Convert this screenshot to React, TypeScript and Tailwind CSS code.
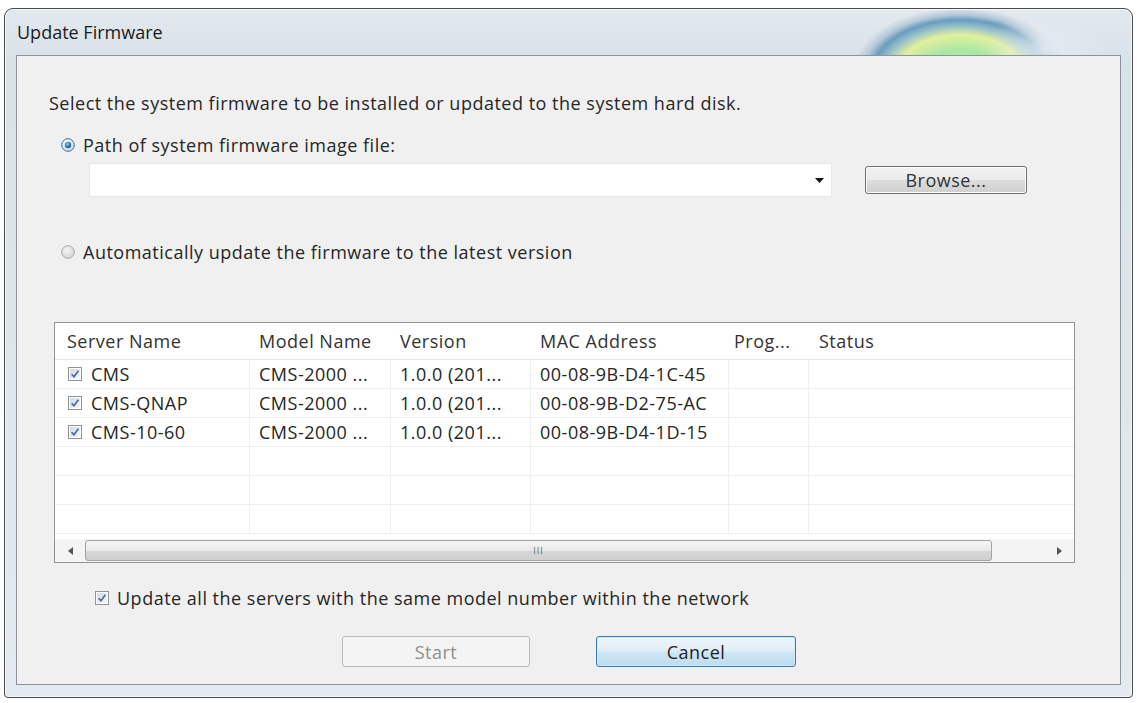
import React from "react";

interface ServerRow {
  name: string;
  model: string;
  version: string;
  mac: string;
}

const servers: ServerRow[] = [
  { name: "CMS", model: "CMS-2000 ...", version: "1.0.0 (201...", mac: "00-08-9B-D4-1C-45" },
  { name: "CMS-QNAP", model: "CMS-2000 ...", version: "1.0.0 (201...", mac: "00-08-9B-D2-75-AC" },
  { name: "CMS-10-60", model: "CMS-2000 ...", version: "1.0.0 (201...", mac: "00-08-9B-D4-1D-15" },
];

function Radio({ checked }: { checked: boolean }) {
  return (
    <svg width="14" height="14" viewBox="0 0 14 14" className="shrink-0">
      <defs>
        <radialGradient id={checked ? "rOn" : "rOff"} cx="0.4" cy="0.35" r="0.7">
          <stop offset="0" stopColor={checked ? "#ffffff" : "#f6f6f6"} />
          <stop offset="1" stopColor={checked ? "#c9d9e6" : "#d4d4d4"} />
        </radialGradient>
        <radialGradient id="dot" cx="0.4" cy="0.35" r="0.7">
          <stop offset="0" stopColor="#8fd0f5" />
          <stop offset="0.6" stopColor="#2b7bb8" />
          <stop offset="1" stopColor="#164d7e" />
        </radialGradient>
      </defs>
      <circle cx="7" cy="7" r="6.3" fill={`url(#${checked ? "rOn" : "rOff"})`} stroke={checked ? "#3f6f93" : "#a7a7a7"} strokeWidth="1" />
      {checked && <circle cx="7" cy="7" r="3.2" fill="url(#dot)" />}
    </svg>
  );
}

function Check() {
  return (
    <svg width="14" height="14" viewBox="0 0 14 14" className="shrink-0">
      <defs>
        <linearGradient id="cb" x1="0" y1="0" x2="1" y2="1">
          <stop offset="0" stopColor="#d3d9e2" />
          <stop offset="1" stopColor="#f7f8fa" />
        </linearGradient>
      </defs>
      <rect x="0.5" y="0.5" width="13" height="13" fill="#fff" stroke="#8e9399" />
      <rect x="2" y="2" width="10" height="10" fill="url(#cb)" />
      <path d="M3.6 7.2 L6 9.8 L10.4 3.8" fill="none" stroke="#4a62a8" strokeWidth="1.6" />
    </svg>
  );
}

export default function App() {
  return (
    <div className="w-[1137px] h-[703px] bg-white pt-[8px] pl-[4px] font-['Open_Sans','Noto_Sans',sans-serif] text-[18px] tracking-[0.5px] text-[#262626]">
      {/* Window frame */}
      <div className="w-[1129px] h-[690px] flex flex-col border border-[#474b50] rounded-t-[9px] rounded-b-[4px] shadow-[inset_0_0_0_1px_#f6f8fa] bg-[radial-gradient(ellipse_60px_40px_at_1040px_40px,rgba(230,236,240,0.9)_0%,transparent_100%),radial-gradient(ellipse_112px_68px_at_955px_64px,#b6ecb0_0%,#a9e7a3_34%,#e2ef9e_56%,#8fbccb_70%,#6b9cbd_78%,rgba(120,160,190,0.4)_86%,transparent_96%),linear-gradient(180deg,#e1e8ee_0%,#d9e2e9_8%,#e4eaef_100%)]">
        {/* Title bar */}
        <div className="h-[46px] shrink-0 flex items-center pl-[12px] text-[18px] tracking-normal text-[#1b1b1b]">
          Update Firmware
        </div>

        {/* Client area */}
        <div className="mx-[11px] mb-[12px] flex-1 border border-[#8c939a] bg-[#f0f0f0] flex flex-col">
          <div className="ml-[32px] mt-[36px] h-[22px] leading-[22px]">
            Select the system firmware to be installed or updated to the system hard disk.
          </div>

          <div className="ml-[44px] mt-[20px] h-[22px] flex items-center gap-[8px]">
            <Radio checked />
            <span>Path of system firmware image file:</span>
          </div>

          <div className="ml-[72px] mt-[7px] flex items-center">
            <div className="w-[743px] h-[34px] bg-white border border-[#e6e6e6] flex items-center justify-end pr-[7px]">
              <svg width="9" height="5" viewBox="0 0 9 5">
                <path d="M0 0 H9 L4.5 5 Z" fill="#111" />
              </svg>
            </div>
            <button className="ml-[33px] w-[162px] h-[28px] rounded-[3px] border border-[#707070] bg-[linear-gradient(180deg,#f2f2f2_0%,#ebebeb_48%,#dddddd_52%,#cfcfcf_100%)] shadow-[inset_0_0_0_1px_#fbfbfb] text-[18px] text-[#333] leading-none">
              Browse...
            </button>
          </div>

          <div className="ml-[44px] mt-[44px] h-[22px] flex items-center gap-[8px]">
            <Radio checked={false} />
            <span>Automatically update the firmware to the latest version</span>
          </div>

          {/* Server list */}
          <div className="ml-[37px] mt-[59px] w-[1021px] h-[241px] border border-[#8f9499] bg-white flex flex-col">
            <div className="h-[37px] shrink-0 flex items-center border-b border-[#e5e5e5] text-[#333]">
              <div className="w-[195px] pl-[12px]">Server Name</div>
              <div className="w-[141px] pl-[9px]">Model Name</div>
              <div className="w-[140px] pl-[9px]">Version</div>
              <div className="w-[198px] pl-[9px]">MAC Address</div>
              <div className="w-[80px] pl-[5px]">Prog...</div>
              <div className="flex-1 pl-[10px]">Status</div>
            </div>
            <div className="flex-1 overflow-hidden">
              {[0, 1, 2, 3, 4, 5].map((i) => {
                const s = servers[i];
                return (
                  <div key={i} className="h-[29px] flex border-b border-[#efefef] whitespace-nowrap">
                    <div className="w-[195px] pl-[13px] flex items-center gap-[9px] border-r border-[#efefef]">
                      {s && <Check />}
                      {s && <span>{s.name}</span>}
                    </div>
                    <div className="w-[141px] pl-[9px] flex items-center border-r border-[#efefef]">{s?.model}</div>
                    <div className="w-[140px] pl-[9px] flex items-center border-r border-[#efefef]">{s?.version}</div>
                    <div className="w-[198px] pl-[9px] flex items-center border-r border-[#efefef]">{s?.mac}</div>
                    <div className="w-[80px] border-r border-[#efefef]"></div>
                    <div className="flex-1"></div>
                  </div>
                );
              })}
            </div>
            {/* Horizontal scrollbar */}
            <div className="h-[23px] shrink-0 flex items-center bg-[#f4f4f4]">
              <div className="w-[30px] h-full flex items-center justify-center">
                <svg width="5" height="8" viewBox="0 0 5 8">
                  <path d="M5 0 V8 L0 4 Z" fill="#555" />
                </svg>
              </div>
              <div className="w-[907px] h-[21px] rounded-[3px] border border-[#a3a3a3] bg-[linear-gradient(180deg,#f5f5f5_0%,#e9e9e9_50%,#d6d6d6_52%,#cfcfcf_100%)] flex items-center justify-center">
                <span className="text-[9px] leading-none tracking-[1px] text-[#6a6a6a]">III</span>
              </div>
              <div className="flex-1 h-full flex items-center justify-end pr-[12px]">
                <svg width="5" height="8" viewBox="0 0 5 8">
                  <path d="M0 0 V8 L5 4 Z" fill="#555" />
                </svg>
              </div>
            </div>
          </div>

          <div className="ml-[78px] mt-[24px] h-[22px] flex items-center gap-[8px]">
            <Check />
            <span>Update all the servers with the same model number within the network</span>
          </div>

          <div className="mt-[27px] flex">
            <button disabled className="ml-[325px] w-[188px] h-[31px] rounded-[3px] border border-[#b7bbbe] bg-[#f4f4f4] text-[18px] text-[#8f8f8f] leading-none">
              Start
            </button>
            <button className="ml-[66px] w-[200px] h-[31px] rounded-[3px] border border-[#3c7fb1] bg-[linear-gradient(180deg,#ecf5fb_0%,#e0eef8_48%,#cfe6f5_52%,#bcdcf0_100%)] shadow-[inset_0_0_0_1px_#c8e8fa] text-[18px] text-[#222] leading-none">
              Cancel
            </button>
          </div>
        </div>
      </div>
    </div>
  );
}
